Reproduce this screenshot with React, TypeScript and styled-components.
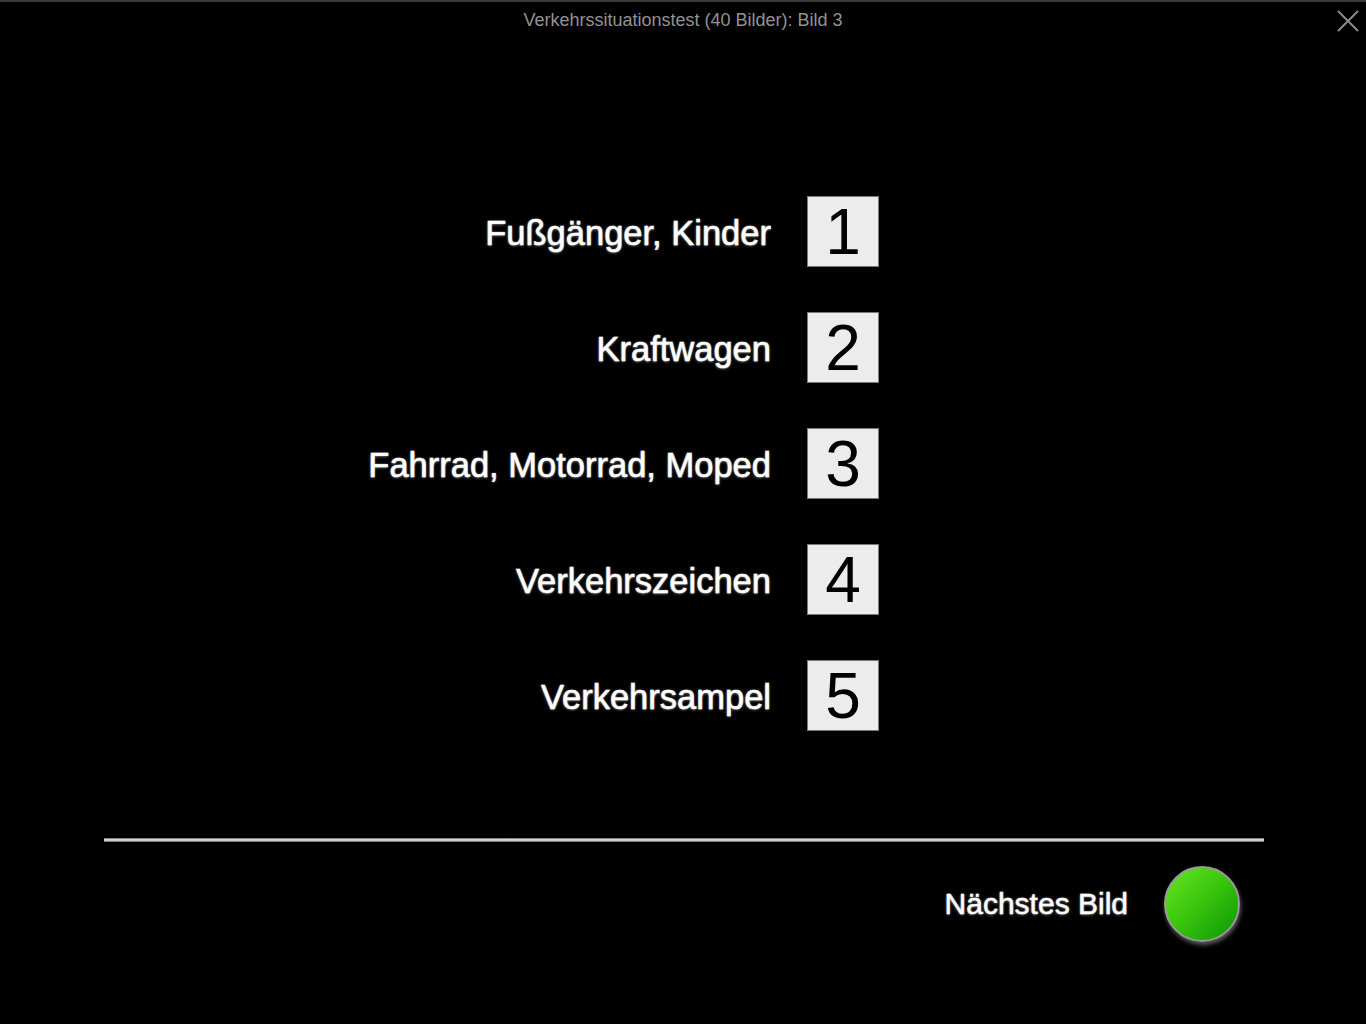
import React from 'react';
import type { FunctionComponent } from 'react';
import styled, { createGlobalStyle } from 'styled-components';

const GlobalStyle = createGlobalStyle`
  html, body {
    margin: 0;
    padding: 0;
    background: #000;
  }
  body {
    font-family: 'Liberation Sans', Arial, Helvetica, sans-serif;
  }
`;

const Screen = styled.div`
  width: 1366px;
  height: 1024px;
  background: #000;
  box-sizing: border-box;
  border-top: 2px solid #3c3c3c;
  display: flex;
  flex-direction: column;
`;

const TopBar = styled.div`
  display: grid;
  grid-template-columns: 1fr auto 1fr;
  align-items: center;
  height: 36px;
`;

const Title = styled.div`
  grid-column: 2;
  color: #929292;
  font-size: 18px;
  line-height: 36px;
`;

const Close = styled.button`
  grid-column: 3;
  justify-self: end;
  width: 24px;
  height: 24px;
  margin-right: 6px;
  margin-top: 2px;
  padding: 0;
  border: none;
  background: transparent;
  cursor: pointer;
  display: flex;
  align-items: center;
  justify-content: center;
`;

const Choices = styled.div`
  display: grid;
  grid-template-columns: 771px 72px;
  column-gap: 36px;
  row-gap: 45px;
  align-items: center;
  margin-top: 158px;
`;

const Label = styled.div`
  justify-self: end;
  padding-top: 4px;
  color: #fff;
  font-size: 34.5px;
  -webkit-text-stroke: 0.5px #fff;
  text-shadow: 0 0 2px rgba(255, 255, 255, 0.5), 0 1px 3px rgba(130, 130, 130, 0.7);
`;

const Key = styled.div`
  width: 72px;
  height: 71px;
  box-sizing: border-box;
  border: 1px solid #7a7a7a;
  background: #ececec;
  color: #000;
  font-size: 64px;
  display: flex;
  align-items: center;
  justify-content: center;
  line-height: 1;
`;

const Divider = styled.div`
  margin: 107px 102px 0 104px;
  height: 4px;
  background: linear-gradient(to bottom, #555 0%, #d8d8d8 35%, #c8c8c8 65%, #555 100%);
`;

const Footer = styled.div`
  display: flex;
  justify-content: flex-end;
  align-items: center;
  gap: 36px;
  margin-top: 24px;
  padding-right: 126px;
`;

const NextLabel = styled.div`
  color: #fff;
  font-size: 30px;
  -webkit-text-stroke: 0.4px #fff;
  text-shadow: 0 0 2px rgba(255, 255, 255, 0.5), 0 1px 3px rgba(130, 130, 130, 0.7);
`;

const NextButton = styled.button`
  width: 76px;
  height: 76px;
  border-radius: 50%;
  box-sizing: border-box;
  border: 2px solid #9a9a9a;
  background: linear-gradient(135deg, #66e61e 0%, #3cc80e 45%, #0a9600 100%);
  box-shadow: 1px 3px 4px rgba(200, 200, 200, 0.45);
  padding: 0;
  cursor: pointer;
`;

const options = [
  'Fußgänger, Kinder',
  'Kraftwagen',
  'Fahrrad, Motorrad, Moped',
  'Verkehrszeichen',
  'Verkehrsampel',
];

const App: FunctionComponent = () => {
  return (
    <>
      <GlobalStyle />
      <Screen>
        <TopBar>
          <Title>Verkehrssituationstest (40 Bilder): Bild 3</Title>
          <Close aria-label="Schließen">
            <svg width="22" height="22" viewBox="0 0 22 22">
              <path d="M1 1 L21 21 M21 1 L1 21" stroke="#8a8a8a" strokeWidth="2" fill="none" />
            </svg>
          </Close>
        </TopBar>
        <Choices>
          {options.map((text, i) => (
            <React.Fragment key={text}>
              <Label>{text}</Label>
              <Key>{i + 1}</Key>
            </React.Fragment>
          ))}
        </Choices>
        <Divider />
        <Footer>
          <NextLabel>Nächstes Bild</NextLabel>
          <NextButton aria-label="Nächstes Bild" />
        </Footer>
      </Screen>
    </>
  );
};

export default App;
